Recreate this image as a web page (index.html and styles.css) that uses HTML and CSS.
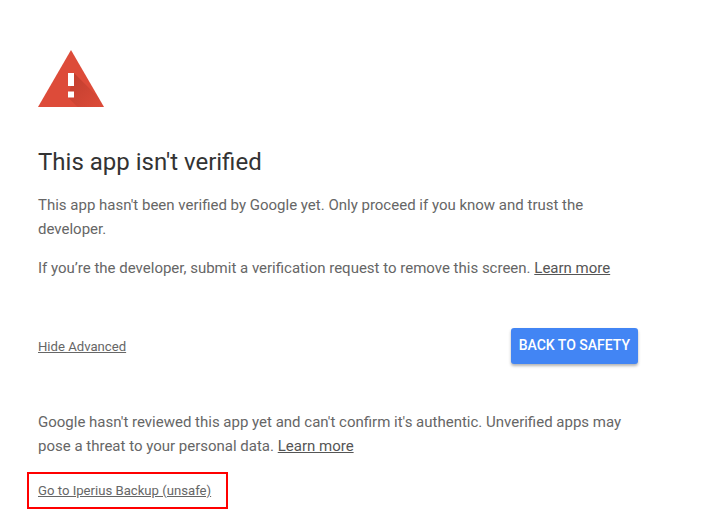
FILE: index.html
```html
<!DOCTYPE html>
<html lang="en">

<head>
    <meta charset="UTF-8">
    <meta name="viewport" content="width=device-width, initial-scale=1.0">
    <title>This app isn't verified</title>
    <link rel="stylesheet" href="styles.css">
</head>

<body>
    <main class="warning">
        <svg class="warning-icon" width="66" height="58" viewBox="0 0 66 58">
            <defs>
                <linearGradient id="icon-shadow" x1="0" y1="0" x2="1" y2="1">
                    <stop offset="0" stop-color="#7a1f14" stop-opacity="0.3" />
                    <stop offset="1" stop-color="#7a1f14" stop-opacity="0" />
                </linearGradient>
            </defs>
            <path d="M33 0 L66 57 L0 57 Z" fill="#dd4b39" />
            <path d="M36 23 L60.500 47.500 L66 57 L39.500 57 L30 47.500 Z" fill="url(#icon-shadow)" />
            <rect x="30" y="23" width="6" height="13" fill="#fff" />
            <rect x="30" y="41.500" width="6" height="6" fill="#fff" />
        </svg>

        <h1 class="title">This app isn't verified</h1>
        <p class="text">This app hasn't been verified by Google yet. Only proceed if you know and trust the developer.</p>
        <p class="text">If you’re the developer, submit a verification request to remove this screen. <a class="dark-link" href="#">Learn more</a></p>

        <div class="actions">
            <a class="small-link" href="#">Hide Advanced</a>
            <button class="safety">BACK TO SAFETY</button>
        </div>

        <p class="text">Google hasn't reviewed this app yet and can't confirm it's authentic. Unverified apps may pose a threat to your personal data. <a class="dark-link" href="#">Learn more</a></p>

        <div class="highlight">
            <a class="small-link" href="#">Go to Iperius Backup (unsafe)</a>
        </div>
    </main>
</body>

</html>
```

FILE: styles.css
```css
body {
    margin: 0;
    background-color: #fff;
    font-family: Roboto, Arial, sans-serif;
}

.warning {
    width: 600px;
    padding: 50px 0 0 38px;
}

.warning-icon {
    display: block;
}

.title {
    margin: 38px 0 15px;
    font-size: 24px;
    font-weight: 400;
    line-height: 32px;
    color: #333;
}

.text {
    margin: 15px 0 0;
    font-size: 15px;
    line-height: 24px;
    color: #666;
}

.dark-link {
    color: #555;
}

.small-link {
    font-size: 13.150px;
    color: #666;
}

.actions {
    display: flex;
    justify-content: space-between;
    align-items: center;
    margin: 48px 0 46px;
}

.safety {
    padding: 0 8px 2px;
    height: 36px;
    border: none;
    border-radius: 3px;
    background-color: #4285f4;
    box-shadow: 0 2px 3px rgba(0, 0, 0, 0.3);
    color: #fff;
    font-family: Roboto, Arial, sans-serif;
    font-size: 14px;
    font-weight: 500;
}

.highlight {
    width: 188px;
    margin: 14px 0 0 -11px;
    padding: 7px 0 7px 9px;
    border: 2px solid #f00;
    line-height: 18px;
}
```
